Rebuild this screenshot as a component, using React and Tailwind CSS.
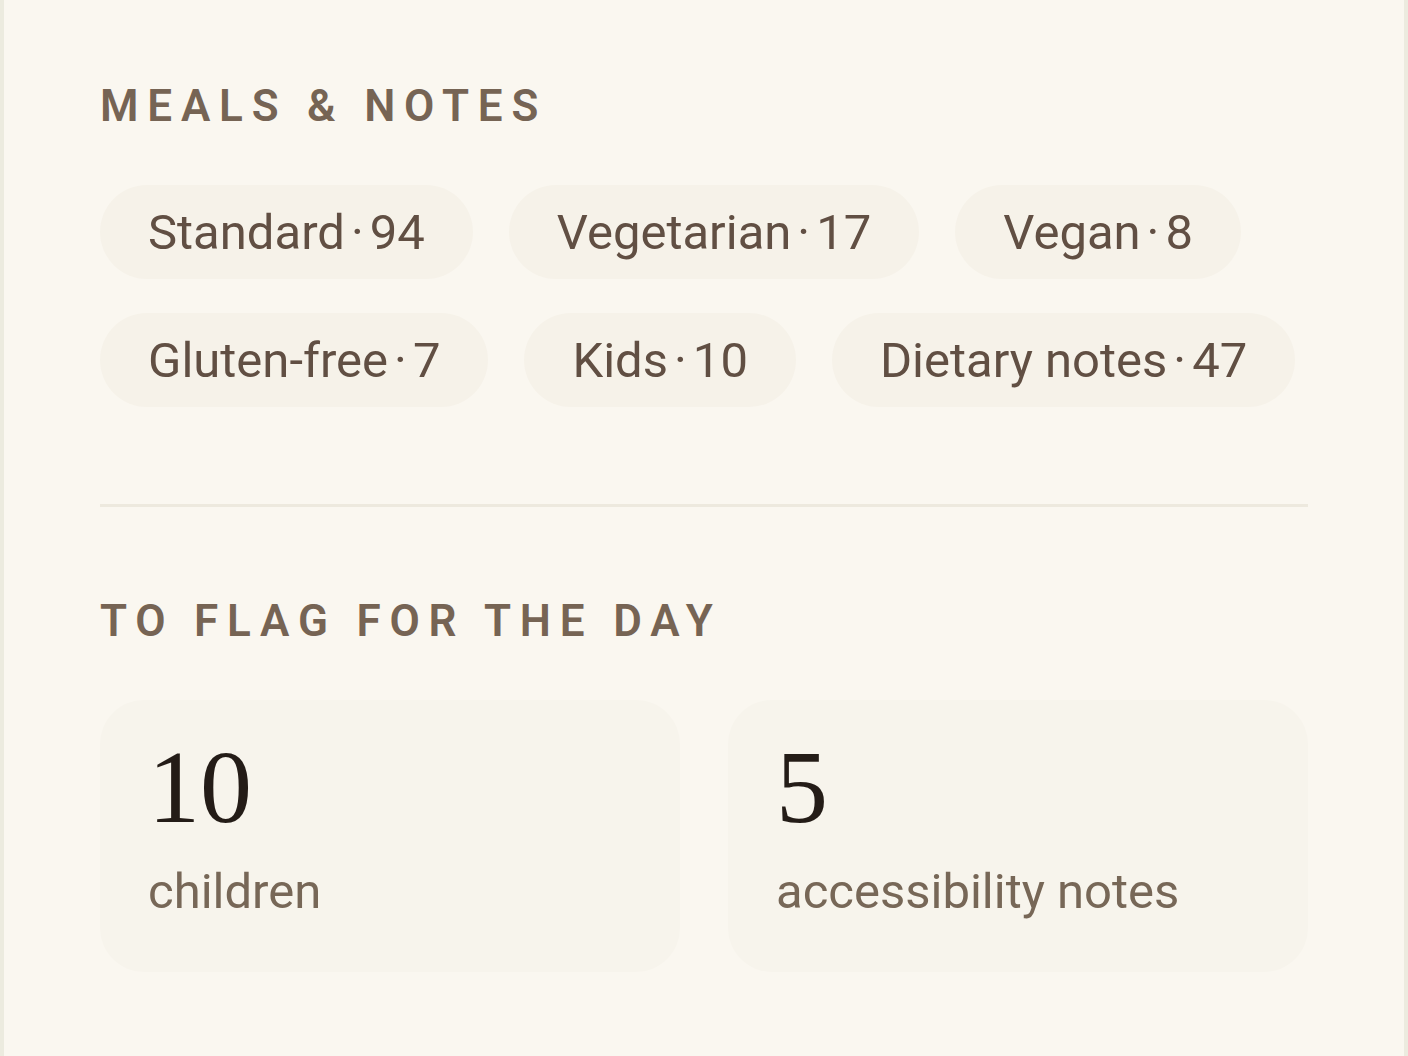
const meals = [
  [
    { label: "Standard", count: 94 },
    { label: "Vegetarian", count: 17 },
    { label: "Vegan", count: 8 },
  ],
  [
    { label: "Gluten-free", count: 7 },
    { label: "Kids", count: 10 },
    { label: "Dietary notes", count: 47 },
  ],
];

const flags = [
  { value: 10, label: "children" },
  { value: 5, label: "accessibility notes" },
];

function SectionTitle({ children }) {
  return (
    <h2 className="text-[44px] leading-none font-semibold uppercase tracking-[0.2em] text-[#766454]">
      {children}
    </h2>
  );
}

function Chip({ label, count }) {
  return (
    <div className="flex h-[94px] items-center rounded-full bg-[#f6f2e9] px-[48px] text-[49px] leading-none text-[#614f43]">
      {label}
      <span className="mx-[6px]">·</span>
      {count}
    </div>
  );
}

function FlagCard({ value, label }) {
  return (
    <div className="flex h-[272px] flex-col rounded-[44px] bg-[#f7f4ec] px-[48px] pt-[35px]">
      <div className="font-['Liberation_Serif',serif] text-[104px] leading-none text-[#241c17]">
        {value}
      </div>
      <div className="mt-[28px] text-[49px] leading-none text-[#776757]">{label}</div>
    </div>
  );
}

export default function App() {
  return (
    <div className="flex min-h-[1056px] bg-[#ecebdf] px-[4px] font-['Roboto',sans-serif]">
      <main className="flex-1 bg-[#faf7f0] px-[96px] pt-[84px] pb-[84px]">
        <SectionTitle>Meals &amp; Notes</SectionTitle>
        <div className="mt-[57px] flex flex-col gap-[34px]">
          {meals.map((row, i) => (
            <div key={i} className="flex gap-[36px]">
              {row.map((m) => (
                <Chip key={m.label} {...m} />
              ))}
            </div>
          ))}
        </div>

        <div className="mt-[97px] h-[3px] bg-[#ede9de]" />

        <div className="mt-[92px]">
          <SectionTitle>To flag for the day</SectionTitle>
        </div>
        <div className="mt-[57px] grid grid-cols-2 gap-[48px]">
          {flags.map((f) => (
            <FlagCard key={f.label} {...f} />
          ))}
        </div>
      </main>
    </div>
  );
}
